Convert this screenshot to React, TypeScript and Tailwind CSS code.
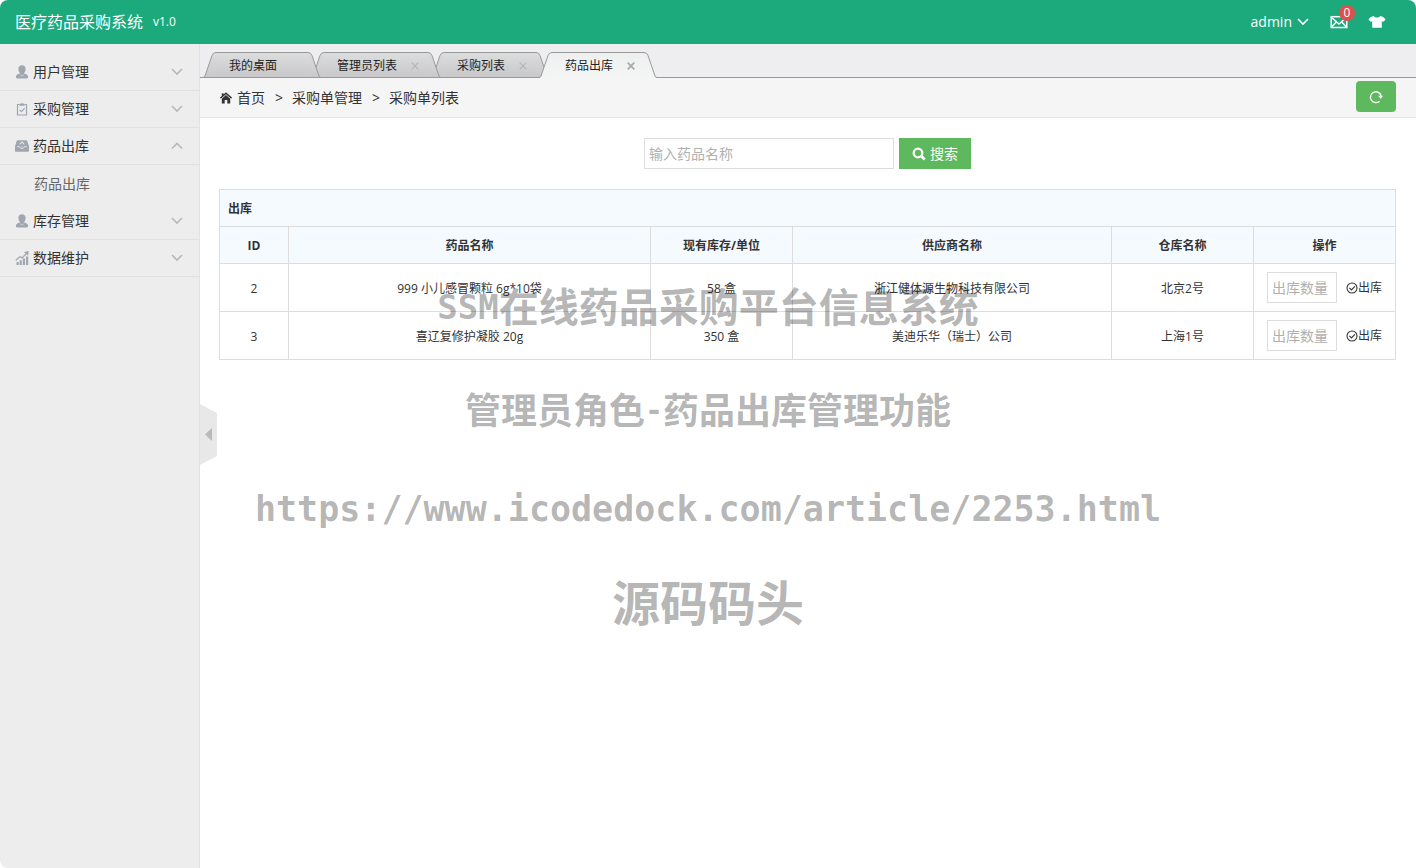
import React from 'react';

const TABS = [
  { title: '我的桌面', closable: false, active: false },
  { title: '管理员列表', closable: true, active: false },
  { title: '采购列表', closable: true, active: false },
  { title: '药品出库', closable: true, active: true },
];

const ROWS = [
  { id: 2, name: '999 小儿感冒颗粒 6g*10袋', stock: '58 盒', supplier: '浙江健体源生物科技有限公司', store: '北京2号' },
  { id: 3, name: '喜辽复修护凝胶 20g', stock: '350 盒', supplier: '美迪乐华（瑞士）公司', store: '上海1号' },
];

/* ================= ICONS ================= */

const UserIcon = () => (
  <svg className="w-3.5 h-3.5 shrink-0" viewBox="0 0 14 14" fill="#a0a7b1">
    <path d="M7 .3c2.200 0 3.600 1.400 3.600 3.600 0 1.600-.5 3-1.400 3.900v.7c1.300.6 3.100 1 3.700 2.200.4.900.2 1.900-.3 2.400-.4.400-1 .5-1.600.5H3c-.6 0-1.200-.1-1.600-.5-.5-.5-.7-1.500-.3-2.400.6-1.200 2.400-1.600 3.700-2.200v-.7c-.9-.9-1.400-2.300-1.400-3.900C3.400 1.700 4.800.3 7 .3z" />
    <path d="M4.900 9.700l2.100 1.300 2.100-1.300" fill="none" stroke="#ededed" strokeWidth=".5" />
  </svg>
);

const ClipboardIcon = () => (
  <svg className="w-3.5 h-3.5 shrink-0" viewBox="0 0 14 14" fill="none" stroke="#a0a7b1" strokeWidth="1.200">
    <path d="M4.500 2.500H2.500v10.500h9V2.500h-2" />
    <path d="M4.700 3.500V1.900h1.300L7 .9l1 1h1.300v1.600z" fill="#a0a7b1" strokeWidth=".5" />
    <path d="M4.600 7.800l1.800 1.800 3.300-3.400" />
  </svg>
);

const OutboxIcon = () => (
  <svg className="w-3.5 h-3.5 shrink-0" viewBox="0 0 14 14" fill="#a0a7b1">
    <path d="M2.700 1.300h8.600c.5 0 .8.300 1 .7L14 7.200v4.600c0 .6-.4 1-1 1H1c-.6 0-1-.4-1-1V7.200L1.700 2c.2-.4.500-.7 1-.7z" />
    <path d="M2.100 7.700h2.600l1 1.600h2.600l1-1.600h2.600" fill="none" stroke="#ededed" strokeWidth=".8" />
    <path d="M7 2.200l2.800 3H8v2.300H6V5.200H4.200z" fill="#ededed" />
    <path d="M7 3.700l1 1.100v2.400H6V4.800z" />
  </svg>
);

const ChartIcon = () => (
  <svg className="w-3.5 h-3.5 shrink-0" viewBox="0 0 14 14" fill="#a0a7b1">
    <path d="M1.500 11h2.200v3H1.500zM4.600 9.300h2.200V14H4.600zM7.800 7.500H10V14H7.800zM11 5.500h2.200V14H11z" />
    <path d="M.8 9.300l4.200-3.600 2.200 1.200 4.300-4.500" fill="none" stroke="#a0a7b1" strokeWidth="1.300" />
    <path d="M9 .9L13.700.1 13 4.700z" />
  </svg>
);

const Chevron = ({ up = false, className = '' }: { up?: boolean; className?: string }) => (
  <svg className={`w-3 h-3 ${className}`} viewBox="0 0 12 12" fill="none" stroke="currentColor" strokeWidth="1.600">
    <path d={up ? 'M1 8.500l5-5 5 5' : 'M1 3l5 5 5-5'} />
  </svg>
);

const MailIcon = () => (
  <svg className="w-[18px] h-3.5" viewBox="0 0 18 14" fill="none" stroke="white" strokeWidth="1.500">
    <rect x="1.200" y="1.700" width="15.600" height="10.800" />
    <path d="M1.500 2.500L9 9l7.500-6.500M1.500 12l4.800-5M16.500 12l-4.800-5" />
  </svg>
);

const ShirtIcon = () => (
  <svg className="w-[18px] h-3.5" viewBox="0 0 18 14" fill="white">
    <path d="M5.800 1c.7 1 1.800 1.500 3.200 1.500S11.500 2 12.200 1c2.600.4 4.300 1.500 5.300 3.700l-2.500 2.200-1.200-.9v6.800H4.200V6L3 6.900.5 4.700C1.500 2.500 3.200 1.400 5.800 1z" />
  </svg>
);

const CheckCircle = () => (
  <svg className="w-3 h-3" viewBox="0 0 12 12" fill="none" stroke="#333" strokeWidth="1.100">
    <circle cx="6" cy="6" r="5" />
    <path d="M3.400 5.900l2 2 3.500-3.600" />
  </svg>
);

const MENU = [
  { title: '用户管理', icon: <UserIcon />, children: [] },
  { title: '采购管理', icon: <ClipboardIcon />, children: [] },
  { title: '药品出库', icon: <OutboxIcon />, children: ['药品出库'] },
  { title: '库存管理', icon: <UserIcon />, children: [] },
  { title: '数据维护', icon: <ChartIcon />, children: [] },
];

/* ================= TABS ================= */

const TabCap = ({ active, right = false }: { active: boolean; right?: boolean }) => (
  <svg className={`w-4 h-[26px] shrink-0 ${right ? '-scale-x-100' : ''}`} viewBox="0 0 16 26">
    <defs>
      <linearGradient id={active ? 'tab-on' : 'tab-off'} x1="0" y1="0" x2="0" y2="1">
        <stop offset="0" stopColor={active ? '#eef0f0' : '#dcdddd'} />
        <stop offset="1" stopColor={active ? '#f4f4f4' : '#c8c8ca'} />
      </linearGradient>
    </defs>
    <path d="M0 26 Q1.500 25.500 2 24 L9 3.500 Q10 .5 13 .5 H16 V26z" fill={active ? 'url(#tab-on)' : 'url(#tab-off)'} />
    <path d="M0 25.500 Q1.500 25.500 2 24 L9 3.500 Q10 .5 13 .5 H16" fill="none" stroke="#999" />
    {!active && <path d="M0 25.500H16" stroke="#999" />}
  </svg>
);

const Tab = ({ title, closable, active }: { title: string; closable: boolean; active: boolean }) => (
  <li className={`flex h-[26px] -mr-2.5 ${active ? 'relative z-10' : ''}`}>
    <TabCap active={active} />
    <div
      className={`flex items-center pt-0.5 pl-2.5 pr-1.5 border-y border-t-[#999] ${
        active
          ? 'bg-linear-to-b from-[#eef0f0] to-[#f4f4f4] border-b-[#f4f4f4]'
          : 'bg-linear-to-b from-[#dcdddd] to-[#c8c8ca] border-b-[#999]'
      }`}
    >
      <button className="text-xs text-[#222]">{title}</button>
      {closable ? (
        <button aria-label={`关闭${title}`} className={`ml-3.5 ${active ? 'text-[#aaa]' : 'text-[#b2b5b8]'}`}>
          <svg className="w-2 h-2" viewBox="0 0 8 8" stroke="currentColor" strokeWidth={active ? 1.800 : 1.200}>
            <path d="M.7.7l6.600 6.600M7.300.7L.7 7.300" />
          </svg>
        </button>
      ) : (
        <span className="ml-3.5 w-2" />
      )}
    </div>
    <TabCap active={active} right />
  </li>
);

/* ================= PAGE ================= */

const App: React.FC = () => {
  return (
    <div className="min-h-screen flex flex-col rounded-lg overflow-hidden bg-white text-[#333] text-sm font-['Open_Sans','Noto_Sans_CJK_SC',sans-serif]">
      <header className="h-11 shrink-0 bg-[#1ca97b] text-white flex items-center justify-between pl-[15px] pr-[30px]">
        <div className="flex items-center">
          <h1 className="text-base">医疗药品采购系统</h1>
          <span className="ml-2.5 text-xs">v1.0</span>
        </div>
        <div className="flex items-center">
          <button className="flex items-center gap-[5px]">
            admin
            <Chevron />
          </button>
          <button aria-label="消息" className="relative ml-[21px]">
            <MailIcon />
            <span className="absolute left-[9px] -top-2.5 size-4 rounded-full bg-[#dd514c] text-xs leading-4 text-center">0</span>
          </button>
          <button aria-label="换肤" className="ml-5">
            <ShirtIcon />
          </button>
        </div>
      </header>

      <div className="flex-1 flex">
        {/* Sidebar */}
        <aside className="w-[200px] shrink-0 bg-[#ededed] border-r border-[#e2e2e2] pt-2.5">
          {MENU.map((item) => (
            <div key={item.title}>
              <button className="w-full h-[37px] pl-[15px] pr-4 flex items-center gap-1 border-b border-[#e2e2e2]">
                {item.icon}
                <span>{item.title}</span>
                <Chevron up={item.children.length > 0} className="ml-auto text-[#b8b8b8]" />
              </button>
              {item.children.map((child) => (
                <a key={child} href="#" className="h-[38px] pl-[34px] flex items-center text-[#666]">
                  {child}
                </a>
              ))}
            </div>
          ))}
        </aside>

        <div className="relative flex-1 min-w-0">
          {/* Sidebar toggle */}
          <button aria-label="收起菜单" className="absolute left-0 top-[360px]">
            <svg className="w-[17px] h-[61px]" viewBox="0 0 17 61">
              <path d="M0 0l17 9v43L0 61z" fill="#e8e8e8" />
              <path d="M12 24v13l-7-6.500z" fill="#bababa" />
            </svg>
          </button>

          <nav className="h-[34px] pt-2 pl-[3px] bg-[#eeeef0] border-b border-[#999]">
            <ul className="flex">
              {TABS.map((tab) => (
                <Tab key={tab.title} {...tab} />
              ))}
            </ul>
          </nav>

          <div className="h-10 px-5 flex items-center bg-[#f5f5f5] border-b border-[#e5e5e5]">
            <svg className="w-3 h-3 mr-[5px]" viewBox="0 0 12 12" fill="#333">
              <path d="M6 .3l6 5.300-.8 1.100L6 2.300.8 6.700 0 5.600l1.800-1.600V1.300h1.700v1.200z" />
              <path d="M6 3.100l4.200 3.600v4.800H7.300V8H4.700v3.500H1.800V6.700z" />
            </svg>
            <a href="#">首页</a>
            <span className="ml-2.5 mr-[9px]">&gt;</span>
            <a href="#">采购单管理</a>
            <span className="ml-2.5 mr-[9px]">&gt;</span>
            <span>采购单列表</span>
            <button aria-label="刷新" className="ml-auto w-10 h-[31px] mb-0.5 rounded bg-[#5eb95e] flex items-center justify-center">
              <svg className="w-3.5 h-3.5" viewBox="0 0 14 14" fill="none" stroke="white" strokeWidth="1.400">
                <path d="M10.500 11.200A5.400 5.400 0 1 1 12.200 6.500" />
                <path d="M9.200 5.800h4.800l-2.200 3.200z" fill="white" stroke="none" />
              </svg>
            </button>
          </div>

          <main className="pl-[19px] pr-5 py-5">
            <form className="flex justify-center gap-[5px]" onSubmit={(e) => e.preventDefault()}>
              <input
                type="text"
                aria-label="药品名称"
                placeholder="输入药品名称"
                className="w-[250px] h-[31px] px-1 border border-[#ddd] placeholder:text-[#b0b0b0] outline-none"
              />
              <button className="w-[72px] h-[31px] bg-[#5eb95e] text-white flex items-center justify-center gap-1">
                <svg className="w-3.5 h-3.5" viewBox="0 0 14 14" fill="none" stroke="white" strokeWidth="2.300">
                  <circle cx="6" cy="6" r="4.300" />
                  <path d="M9 9l3.800 3.600" strokeWidth="2.800" />
                </svg>
                搜索
              </button>
            </form>

            <table className="mt-5 w-full table-fixed border-collapse text-xs text-center [&_th]:border [&_td]:border [&_th]:border-[#ddd] [&_td]:border-[#ddd] [&_th]:pt-0.5">
              <colgroup>
                <col className="w-[69px]" />
                <col className="w-[362px]" />
                <col className="w-[142px]" />
                <col className="w-[319px]" />
                <col className="w-[142px]" />
                <col className="w-[142px]" />
              </colgroup>
              <thead className="bg-[#f5fafe]">
                <tr className="h-[37px]">
                  <th colSpan={6} className="px-2 text-left">出库</th>
                </tr>
                <tr className="h-[37px]">
                  <th>ID</th>
                  <th>药品名称</th>
                  <th>现有库存/单位</th>
                  <th>供应商名称</th>
                  <th>仓库名称</th>
                  <th>操作</th>
                </tr>
              </thead>
              <tbody>
                {ROWS.map((row) => (
                  <tr key={row.id} className="h-12">
                    <td className="pt-0.5">{row.id}</td>
                    <td className="pt-0.5">{row.name}</td>
                    <td className="pt-0.5">{row.stock}</td>
                    <td className="pt-0.5">{row.supplier}</td>
                    <td className="pt-0.5">{row.store}</td>
                    <td>
                      <div className="flex items-center justify-center gap-[9px]">
                        <input
                          type="text"
                          aria-label={`${row.name} 出库数量`}
                          placeholder="出库数量"
                          className="w-[70px] h-[31px] px-1 text-sm border border-[#ddd] placeholder:text-[#b0b0b0] outline-none"
                        />
                        <button className="flex items-center">
                          <CheckCircle />
                          出库
                        </button>
                      </div>
                    </td>
                  </tr>
                ))}
              </tbody>
            </table>
          </main>
        </div>
      </div>

      {/* Watermark laid over the whole page */}
      <div className="absolute inset-x-0 top-[279px] flex flex-col items-center pointer-events-none select-none text-black/30 font-bold whitespace-nowrap">
        <p className="flex items-center text-[40px] leading-[56px]">
          <span className="text-[34px] font-['DejaVu_Sans_Mono',monospace]">SSM</span>
          在线药品采购平台信息系统
        </p>
        <p className="mt-12 flex items-center text-4xl leading-[56px]">
          管理员角色
          <span className="text-3xl font-['DejaVu_Sans_Mono',monospace]">-</span>
          药品出库管理功能
        </p>
        <p className="mt-[42px] text-[35px] leading-[56px] font-['DejaVu_Sans_Mono',monospace]">
          https://www.icodedock.com/article/2253.html
        </p>
        <p className="mt-[38px] text-5xl leading-[56px]">源码码头</p>
      </div>
    </div>
  );
};

export default App;
